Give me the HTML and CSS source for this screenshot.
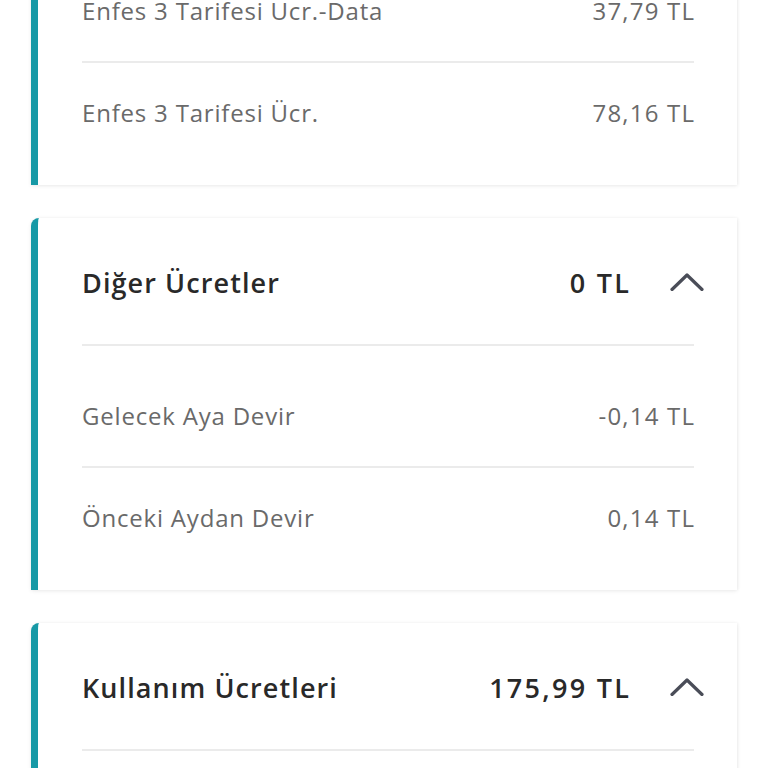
FILE: index.html
```html
<!DOCTYPE html>
<html lang="tr">
<head>
<meta charset="utf-8">
<link rel="stylesheet" href="styles.css">
</head>
<body>
<div class="page">
  <section class="card card-first">
    <div class="list">
      <div class="row"><span class="label">Enfes 3 Tarifesi Ucr.-Data</span><span class="value">37,79 TL</span></div>
      <div class="divider"></div>
      <div class="row"><span class="label">Enfes 3 Tarifesi Ücr.</span><span class="value">78,16 TL</span></div>
    </div>
  </section>

  <section class="card">
    <div class="head">
      <span class="title">Diğer Ücretler</span>
      <span class="total">0 TL</span>
      <svg class="chev" viewBox="0 0 34 18" width="34" height="18"><path d="M2 16.5 L17 2 L32 16.5" fill="none" stroke="#4a4d58" stroke-width="3.2" stroke-linecap="round" stroke-linejoin="round"/></svg>
    </div>
    <div class="divider"></div>
    <div class="list">
      <div class="row"><span class="label">Gelecek Aya Devir</span><span class="value">-0,14 TL</span></div>
      <div class="divider"></div>
      <div class="row"><span class="label">Önceki Aydan Devir</span><span class="value">0,14 TL</span></div>
    </div>
  </section>

  <section class="card">
    <div class="head">
      <span class="title">Kullanım Ücretleri</span>
      <span class="total">175,99 TL</span>
      <svg class="chev" viewBox="0 0 34 18" width="34" height="18"><path d="M2 16.5 L17 2 L32 16.5" fill="none" stroke="#4a4d58" stroke-width="3.2" stroke-linecap="round" stroke-linejoin="round"/></svg>
    </div>
    <div class="divider"></div>
    <div class="list">
      <div class="row"><span class="label">&nbsp;</span><span class="value">&nbsp;</span></div>
    </div>
  </section>
</div>
</body>
</html>
```

FILE: styles.css
```css
html, body {
  margin: 0;
  padding: 0;
  background: #ffffff;
  overflow: hidden;
}
body {
  font-family: "Open Sans", "Noto Sans", sans-serif;
  width: 768px;
  height: 768px;
}
.page {
  padding: 0 31px;
  display: flex;
  flex-direction: column;
  gap: 33px;
}
.card {
  background: #ffffff;
  border-left: 7px solid #1799a6;
  border-top-left-radius: 8px;
  box-shadow: 0 1px 4px rgba(0, 0, 0, 0.08), 1px 0 3px rgba(0, 0, 0, 0.04);
  padding: 0 43px 0 44px;
}
.card-first {
  margin-top: -59px;
  border-top-left-radius: 0;
}
.head {
  height: 124px;
  padding-top: 2px;
  display: flex;
  align-items: center;
  margin-right: -10px;
}
.title {
  flex: 1;
  font-size: 27px;
  font-weight: 600;
  letter-spacing: 1.1px;
  color: #292929;
}
.total {
  font-size: 27px;
  font-weight: 600;
  letter-spacing: 2.3px;
  color: #292929;
  margin-right: 38.7px;
}
.chev {
  display: block;
}
.divider {
  height: 2px;
  background: #ebebeb;
}
.list {
  padding: 20px 0 22px;
}
.row {
  box-sizing: border-box;
  height: 100px;
  padding-bottom: 2px;
  display: flex;
  align-items: center;
  justify-content: space-between;
  font-size: 24px;
  color: #6a6a6a;
}
.label {
  letter-spacing: 0.8px;
}
.value {
  letter-spacing: 1.2px;
  margin-right: -1.2px;
}
```
